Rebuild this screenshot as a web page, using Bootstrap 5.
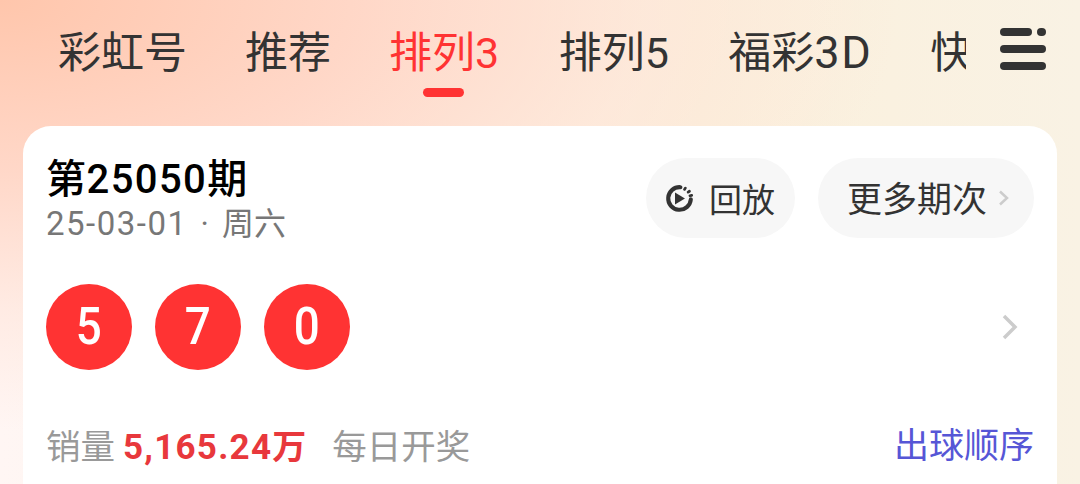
<!DOCTYPE html>
<html lang="zh-CN">
<head>
<meta charset="utf-8">
<title>排列3</title>
<link rel="stylesheet" href="https://cdn.jsdelivr.net/npm/bootstrap@5.3.0/dist/css/bootstrap.min.css">
<style>
html,body{height:484px;overflow:hidden}
body{width:1080px;font-family:Roboto,"Noto Sans CJK SC",sans-serif;background:#fff}
.stage{height:484px;overflow:hidden;background:
  radial-gradient(ellipse 900px 430px at 0 0,#ffc6ac 0,rgba(255,214,198,.95) 40%,rgba(255,226,214,.55) 72%,rgba(255,240,235,0) 100%),
  linear-gradient(90deg,#fff6f4 0,#fbf0dc 65%,#f9f2e4 100%)}
.tabbar{height:126px;padding-left:58px}
.tabs{width:908px;gap:58px;overflow:hidden;font-size:43px;line-height:60px;color:#333;padding-top:23px;height:126px;flex:none}
.tabitem{flex:none;white-space:nowrap;position:relative}
.latin{letter-spacing:1.5px}
.wide{letter-spacing:1.5px;font-size:45px;line-height:1}
.tabitem.on{color:#f33}
.tabitem.on::after{content:"";position:absolute;left:34px;top:65px;width:41px;height:9px;border-radius:5px;background:#f33}
.menuicon{margin:28px 0 0 34px;width:47px;height:42px;flex:none}
.sheet{margin:0 23px;height:400px;background:#fff;border-radius:28px 28px 0 0;padding:32px 23px 0 23px}
.issue{font-size:40px;line-height:42px;font-weight:500;color:#000;margin-top:1px;letter-spacing:.5px}
.issue .latin{letter-spacing:1.4px}
.when{font-size:32px;line-height:44px;color:#777;margin-top:1px}
.when .latin{font-size:33px;letter-spacing:1.5px}
.dot{margin:0 13px}
.pill{height:80px;border-radius:40px;background:#f7f7f7;font-size:35px;color:#333}
.pilltxt{padding-top:6px}
.pill-play{width:149px;gap:15px;padding-left:19px}
.pill-play .pilltxt{font-size:33px}
.pill-more{width:216px;margin-left:23px;gap:11px;padding-left:29px}
.balls{gap:23px;margin-top:38px;height:86px}
.ball{width:86px;height:86px;border-radius:50%;background:#f33;color:#fff;font-size:52px;font-weight:500;line-height:1}
.glyph{display:inline-block;transform:scaleX(.88)}
.chev{margin-right:16px}
.foot{margin-top:50px;font-size:34.500px;line-height:54px;color:#999}
.sold{color:#e8383c;font-weight:700;font-size:35px;margin:0 26px 0 8px;letter-spacing:1.25px}
.wan{font-size:34px;letter-spacing:0}
.rule{color:#5656d6;font-size:35px}
</style>
</head>
<body>
<div class="stage">
  <div class="tabbar d-flex">
    <div class="tabs d-flex">
      <div class="tabitem">彩虹号</div>
      <div class="tabitem">推荐</div>
      <div class="tabitem on">排列<span class="latin">3</span></div>
      <div class="tabitem">排列<span class="latin">5</span></div>
      <div class="tabitem">福彩<span class="wide">3D</span></div>
      <div class="tabitem">快手</div>
    </div>
    <svg class="menuicon" viewBox="0 0 47 42" fill="#333"><rect x="0" y="0" width="32" height="8" rx="4"/><rect x="37" y="0" width="9" height="8" rx="4"/><rect x="0" y="17" width="46" height="8" rx="4"/><rect x="0" y="34" width="46" height="8" rx="4"/></svg>
  </div>
  <div class="sheet">
    <div class="d-flex justify-content-between">
      <div>
        <div class="issue">第<span class="latin">25050</span>期</div>
        <div class="when"><span class="latin">25-03-01</span><span class="dot">·</span>周六</div>
      </div>
      <div class="d-flex">
        <div class="pill pill-play d-flex align-items-center">
          <svg width="29" height="29" viewBox="0 0 32 32" fill="none"><path d="M17 3.500A12.500 12.500 0 1 0 28.500 17" stroke="#333" stroke-width="4.500" stroke-linecap="round"/><path d="M11 9.500v13l11-6.500z" fill="#333"/><path d="M21.500 6l1-1.500M25.500 9l1.500-1M27.500 13l2-.5" stroke="#333" stroke-width="3" stroke-linecap="round"/></svg>
          <span class="pilltxt">回放</span>
        </div>
        <div class="pill pill-more d-flex align-items-center">
          <span class="pilltxt">更多期次</span>
          <svg width="12" height="16" viewBox="0 0 12 16" fill="none"><path d="M2 1.500l7 6.500-7 6.500" stroke="#ccc" stroke-width="2.500"/></svg>
        </div>
      </div>
    </div>
    <div class="balls d-flex align-items-center">
      <div class="ball d-flex align-items-center justify-content-center"><span class="glyph">5</span></div>
      <div class="ball d-flex align-items-center justify-content-center"><span class="glyph">7</span></div>
      <div class="ball d-flex align-items-center justify-content-center"><span class="glyph">0</span></div>
      <svg class="chev ms-auto" width="16" height="26" viewBox="0 0 16 26" fill="none"><path d="M2 2l11 11L2 24" stroke="#ccc" stroke-width="3.500"/></svg>
    </div>
    <div class="foot d-flex justify-content-between">
      <div>销量<span class="sold">5,165.24<span class="wan">万</span></span>每日开奖</div>
      <div class="rule">出球顺序</div>
    </div>
  </div>
</div>
<script src="https://cdn.jsdelivr.net/npm/bootstrap@5.3.0/dist/js/bootstrap.bundle.min.js"></script>
</body>
</html>
